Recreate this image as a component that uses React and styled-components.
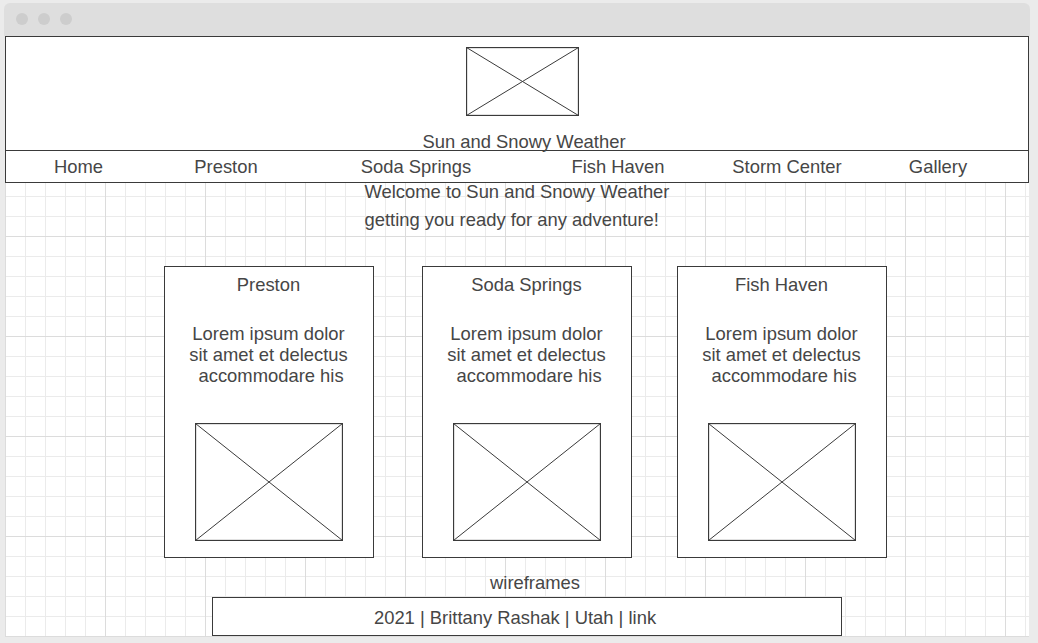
import React from 'react'
import styled, { createGlobalStyle } from 'styled-components'

const GlobalStyle = createGlobalStyle`
    * {
        box-sizing: border-box;
    }

    body {
        margin: 0;
        padding-top: 3px;
        background: #ebebeb;
        font-family: "Liberation Sans", Arial, sans-serif;
        color: #464646;
    }
`;

const Window = styled.div`
    margin-left: 4px;
    width: 1026px;
`;

const TitleBar = styled.div`
    height: 33px;
    background: #dedede;
    border-radius: 6px 6px 0 0;
    display: flex;
    align-items: center;
    gap: 10px;
    padding: 0 0 1px 12px;
`;

const Dot = styled.span`
    width: 12px;
    height: 12px;
    border-radius: 50%;
    background: #cdcdcd;
`;

const Header = styled.header`
    margin: 0 1px;
    height: 114px;
    border: 1px solid #3a3a3a;
    border-bottom: none;
    background: #fff;
    display: flex;
    flex-direction: column;
    align-items: center;
    padding: 10px 0 0 10px;
`;

const Frame = styled.svg`
    display: block;
    width: ${props => props.$w}px;
    height: ${props => props.$h}px;
    flex-shrink: 0;
`;

const SiteTitle = styled.h1`
    margin: 16px 0 0 4px;
    font-size: 18.4px;
    font-weight: normal;
    line-height: 20px;
`;

const Nav = styled.nav`
    margin: 0 1px;
    height: 33px;
    border: 1px solid #3a3a3a;
    background: #fff;
    display: grid;
    grid-template-columns: 145px 150px 230px 174px 164px 138px;
    align-items: center;
`;

const NavItem = styled.a`
    text-align: center;
    font-size: 18.4px;
    line-height: 20px;
    margin-top: ${props => props.$drop || 0}px;
`;

const Main = styled.main`
    margin: 0 1px;
    padding-bottom: 1px;
    background-color: #fff;
    background-image:
        linear-gradient(to right, #dcdcdc 1px, transparent 1px),
        linear-gradient(to bottom, #dcdcdc 1px, transparent 1px),
        linear-gradient(to right, #ebebeb 1px, transparent 1px),
        linear-gradient(to bottom, #ebebeb 1px, transparent 1px);
    background-size: 100px 100px, 100px 100px, 20px 20px, 20px 20px;
    background-position: 0 0, 0 53px, 0 0, 0 13px;
    display: flex;
    flex-direction: column;
    align-items: center;
`;

const Welcome = styled.div`
    margin-top: -5px;
    font-size: 18.4px;
    line-height: 28px;
    text-align: left;
`;

const CardRow = styled.section`
    margin-top: 32px;
    padding-left: 16px;
    display: flex;
`;

const Card = styled.div`
    width: 210px;
    height: 292px;
    margin-left: ${props => props.$gap || 0}px;
    border: 1px solid #3a3a3a;
    background: #fff;
    display: flex;
    flex-direction: column;
    align-items: center;
    padding: 8px 0 16px;
`;

const CardTitle = styled.h2`
    margin: 0;
    font-size: 18.4px;
    font-weight: normal;
    line-height: 20px;
`;

const CardText = styled.p`
    margin: 28px 0 0;
    font-size: 18.4px;
    line-height: 21px;
    text-align: center;
    white-space: pre;
`;

const CardImage = styled.div`
    margin-top: auto;
`;

const Caption = styled.p`
    margin: 15px 0 0 36px;
    font-size: 18.4px;
    line-height: 20px;
`;

const Footer = styled.footer`
    align-self: flex-start;
    margin: 4px 0 0 207px;
    width: 630px;
    height: 39px;
    border: 1px solid #3a3a3a;
    background: #fff;
    display: flex;
    align-items: center;
    justify-content: center;
    padding: 2px 24px 0 0;
    font-size: 18.4px;
`;

const Placeholder = ({ w, h }) => (
    <Frame $w={w} $h={h} viewBox={`0 0 ${w} ${h}`}>
        <rect x="0.5" y="0.5" width={w - 1} height={h - 1} fill="#fff" stroke="#3a3a3a" strokeWidth="1.3" />
        <line x1="0.5" y1="0.5" x2={w - 0.5} y2={h - 0.5} stroke="#3a3a3a" strokeWidth="1" />
        <line x1={w - 0.5} y1="0.5" x2="0.5" y2={h - 0.5} stroke="#3a3a3a" strokeWidth="1" />
    </Frame>
);

const navLinks = [
    { label: 'Home', drop: 0 },
    { label: 'Preston', drop: 0 },
    { label: 'Soda Springs', drop: 1 },
    { label: 'Fish Haven', drop: 0 },
    { label: 'Storm Center', drop: 0 },
    { label: 'Gallery', drop: 1 },
];

const towns = [
    { name: 'Preston', gap: 0 },
    { name: 'Soda Springs', gap: 48 },
    { name: 'Fish Haven', gap: 45 },
];

const lorem = 'Lorem ipsum dolor\nsit amet et delectus\n accommodare his';

const App = () => {
    return (
        <>
            <GlobalStyle />
            <Window>
                <TitleBar>
                    <Dot />
                    <Dot />
                    <Dot />
                </TitleBar>

                <Header>
                    <Placeholder w={113} h={69} />
                    <SiteTitle>Sun and Snowy Weather</SiteTitle>
                </Header>

                <Nav>
                    {navLinks.map(link => (
                        <NavItem key={link.label} $drop={link.drop}>{link.label}</NavItem>
                    ))}
                </Nav>

                <Main>
                    <Welcome>
                        Welcome to Sun and Snowy Weather<br />
                        getting you ready for any adventure!
                    </Welcome>

                    <CardRow>
                        {towns.map(town => (
                            <Card key={town.name} $gap={town.gap}>
                                <CardTitle>{town.name}</CardTitle>
                                <CardText>{lorem}</CardText>
                                <CardImage>
                                    <Placeholder w={148} h={118} />
                                </CardImage>
                            </Card>
                        ))}
                    </CardRow>

                    <Caption>wireframes</Caption>
                    <Footer>2021 | Brittany Rashak | Utah | link</Footer>
                </Main>
            </Window>
        </>
    )
}

export default App
